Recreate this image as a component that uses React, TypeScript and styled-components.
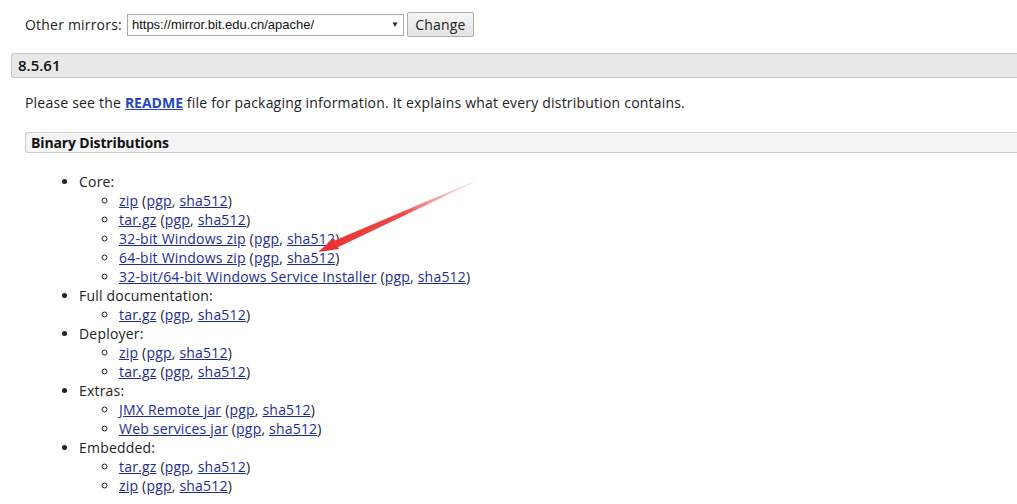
import React from 'react';
import styled, { createGlobalStyle } from 'styled-components';

const GlobalStyle = createGlobalStyle`
  html, body {
    margin: 0;
    padding: 0;
    background: #ffffff;
  }
  body {
    font-family: 'Open Sans', 'Liberation Sans', Arial, sans-serif;
    font-size: 14px;
    line-height: 19px;
    letter-spacing: 0.2px;
    color: #222222;
  }
`;

type Download = { label: string };
type Group = { title: string; items: Download[] };

const GROUPS: Group[] = [
  {
    title: 'Core:',
    items: [
      { label: 'zip' },
      { label: 'tar.gz' },
      { label: '32-bit Windows zip' },
      { label: '64-bit Windows zip' },
      { label: '32-bit/64-bit Windows Service Installer' },
    ],
  },
  { title: 'Full documentation:', items: [{ label: 'tar.gz' }] },
  { title: 'Deployer:', items: [{ label: 'zip' }, { label: 'tar.gz' }] },
  {
    title: 'Extras:',
    items: [{ label: 'JMX Remote jar' }, { label: 'Web services jar' }],
  },
  { title: 'Embedded:', items: [{ label: 'tar.gz' }, { label: 'zip' }] },
];

const App = () => {
  return (
    <S.Page>
      <GlobalStyle />
      <S.MirrorForm>
        <span>Other mirrors:</span>
        <S.Select>
          <span>https://mirror.bit.edu.cn/apache/</span>
          <S.SelectArrow>▼</S.SelectArrow>
        </S.Select>
        <S.Button type="button">Change</S.Button>
      </S.MirrorForm>

      <S.Version>8.5.61</S.Version>
      <S.Section>
        <S.Intro>
          Please see the <S.Readme href="#">README</S.Readme> file for packaging
          information. It explains what every distribution contains.
        </S.Intro>

        <S.SubHeading>Binary Distributions</S.SubHeading>
        <S.Section>
          <S.List>
            {GROUPS.map((group) => (
              <li key={group.title}>
                {group.title}
                <S.SubList>
                  {group.items.map((item, i) => (
                    <li key={i}>
                      <S.Link href="#">{item.label}</S.Link> (
                      <S.Link href="#">pgp</S.Link>,{' '}
                      <S.Link href="#">sha512</S.Link>)
                    </li>
                  ))}
                </S.SubList>
              </li>
            ))}
          </S.List>
        </S.Section>
      </S.Section>

      {/* red annotation arrow drawn over the list */}
      <S.Annotation width="1017" height="504" viewBox="0 0 1017 504">
        <defs>
          <linearGradient id="arrowFade" x1="318" y1="252" x2="473" y2="182" gradientUnits="userSpaceOnUse">
            <stop offset="0" stopColor="#e8302f" />
            <stop offset="0.55" stopColor="#ee4a4a" />
            <stop offset="1" stopColor="#f7c8c8" stopOpacity="0.4" />
          </linearGradient>
        </defs>
        <polygon
          points="337.8,247.2 334.8,240.6 473.2,181.6 473.6,182.6"
          fill="url(#arrowFade)"
        />
        <polygon points="318,252 338.8,249.0 333.9,238.2" fill="#e8302f" />
      </S.Annotation>
    </S.Page>
  );
};
export default App;

const S = {
  Page: styled.div`
    position: relative;
    width: 1017px;
    height: 504px;
    overflow: hidden;
    padding-left: 11px;
    box-sizing: border-box;
  `,
  MirrorForm: styled.form`
    display: flex;
    align-items: center;
    height: 25px;
    padding-top: 12px;
    margin-left: 14px;
    gap: 5px;
  `,
  Select: styled.div`
    display: flex;
    align-items: center;
    justify-content: space-between;
    box-sizing: border-box;
    width: 277px;
    height: 22px;
    padding: 0 4px 0 4px;
    border: 1px solid #a9a9a9;
    background: #ffffff;
    font-family: 'Liberation Sans', Arial, sans-serif;
    font-size: 13px;
    letter-spacing: 0;
    color: #111;
  `,
  SelectArrow: styled.span`
    font-size: 8px;
    color: #222;
  `,
  Button: styled.button`
    box-sizing: border-box;
    height: 25px;
    width: 67px;
    margin-left: -2px;
    padding: 0;
    border: 1px solid #adadad;
    border-radius: 2px;
    background: linear-gradient(#f6f6f6, #e3e3e3);
    font-family: 'Open Sans', 'Liberation Sans', sans-serif;
    font-size: 14px;
    letter-spacing: 0.2px;
    color: #222;
  `,
  Version: styled.h3`
    margin: 16px 0 0 0;
    padding-left: 6px;
    height: 23px;
    line-height: 23px;
    font-size: 15px;
    font-weight: 600;
    letter-spacing: 0;
    color: #111;
    background: #e8e8e8;
    border: 1px solid #c8c8c8;
    border-right: none;
    border-radius: 3px 0 0 3px;
  `,
  Section: styled.div`
    margin-left: 14px;
  `,
  Intro: styled.p`
    margin: 15px 0 0 0;
  `,
  Readme: styled.a`
    color: #1f47c2;
    font-weight: 700;
    letter-spacing: 0;
    text-decoration: underline;
  `,
  SubHeading: styled.h4`
    margin: 20px 0 0 0;
    padding-left: 5px;
    height: 19px;
    line-height: 19px;
    font-size: 14px;
    font-weight: 700;
    letter-spacing: -0.15px;
    color: #111;
    background: #f5f5f5;
    border: 1px solid #cccccc;
    border-right: none;
    border-radius: 3px 0 0 3px;
  `,
  List: styled.ul`
    margin: 19px 0 0 0;
    padding-left: 40px;
    list-style: disc;
  `,
  SubList: styled.ul`
    margin: 0;
    padding-left: 40px;
    list-style: circle;
  `,
  Link: styled.a`
    color: #1c2c9c;
    text-decoration: underline;
  `,
  Annotation: styled.svg`
    position: absolute;
    top: 0;
    left: 0;
    pointer-events: none;
  `,
};
